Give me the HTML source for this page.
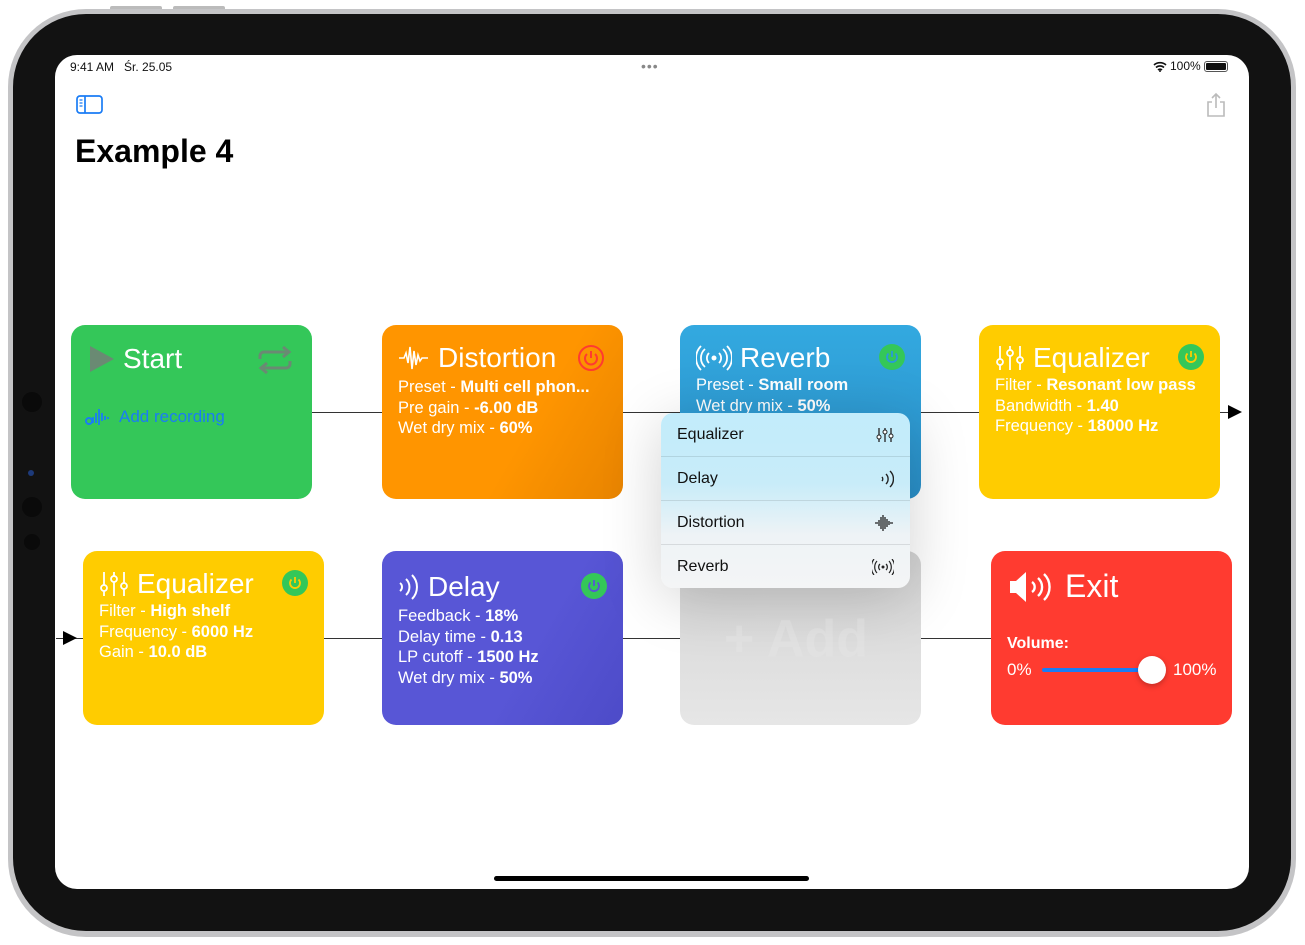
<!DOCTYPE html>
<html><head><meta charset="utf-8">
<style>
*{margin:0;padding:0;box-sizing:border-box}
body{width:1305px;height:945px;background:#fff;position:relative;overflow:hidden;font-family:"Liberation Sans",sans-serif}
.abs{position:absolute}
.frame{left:8px;top:9px;width:1288px;height:928px;border-radius:78px;background:#c4c4c6;}
.bez{left:13px;top:14px;width:1278px;height:917px;border-radius:73px;background:#121212}
.screen{left:55px;top:55px;width:1194px;height:834px;border-radius:22px;background:#fff;overflow:hidden}
.card{position:absolute;width:241px;height:174px;border-radius:14px;color:#fff;overflow:hidden}
.title{position:absolute;font-size:28px;left:16px;top:17px;display:flex;align-items:center;gap:8px;white-space:nowrap}
.lines{position:absolute;left:16px;font-size:16.5px;line-height:20.5px;white-space:nowrap}
.lines b{font-weight:bold}
.pw{position:absolute;width:26px;height:26px;border-radius:50%;background:#34c759;top:20px;right:16px}
.line{position:absolute;height:1px;background:#333}
.menu{left:661px;top:413px;width:249px;height:175px;border-radius:12px;overflow:hidden;box-shadow:0 10px 60px rgba(0,0,0,.18)}
.mi{height:44px;border-bottom:1px solid rgba(0,0,0,.1);display:flex;align-items:center;justify-content:space-between;padding:0 16px;font-size:16px;color:#111}
</style></head><body>
<div class="abs" style="left:110px;top:6px;width:52px;height:5px;background:#bbb;border-radius:2px"></div>
<div class="abs" style="left:173px;top:6px;width:52px;height:5px;background:#bbb;border-radius:2px"></div>
<div class="abs frame"></div>
<div class="abs bez"></div>
<div class="abs" style="left:22px;top:392px;width:20px;height:20px;border-radius:50%;background:#0a0a0a"></div>
<div class="abs" style="left:28px;top:470px;width:6px;height:6px;border-radius:50%;background:#1d3a7a"></div>
<div class="abs" style="left:22px;top:497px;width:20px;height:20px;border-radius:50%;background:#0a0a0a"></div>
<div class="abs" style="left:24px;top:534px;width:16px;height:16px;border-radius:50%;background:#0a0a0a"></div>

<div class="abs screen">
  <div class="abs" style="left:15px;top:5px;font-size:12px;color:#111">9:41 AM&nbsp;&nbsp; Śr. 25.05</div>
  <div class="abs" style="left:586px;top:3px;font-size:14px;color:#888;letter-spacing:1px">•••</div>
  <div class="abs" style="left:1098px;top:4px;font-size:12px;color:#111;display:flex;align-items:center;gap:3px">
    <svg width="14" height="11" viewBox="0 0 14 11"><path d="M1 4a9 9 0 0 1 12 0M3 6.5a6 6 0 0 1 8 0M5 9a3 3 0 0 1 4 0" stroke="#111" stroke-width="1.6" fill="none"/><circle cx="7" cy="10" r="1" fill="#111"/></svg>100%
    <span style="display:inline-block;width:24px;height:11px;border:1px solid #555;border-radius:3px;padding:1px"><span style="display:block;height:100%;background:#111;border-radius:1px"></span></span>
  </div>
  <svg class="abs" style="left:21px;top:40px" width="27" height="20" viewBox="0 0 27 20"><rect x="1" y="1" width="25" height="17" rx="3" fill="none" stroke="#1a7cf5" stroke-width="1.7"/><line x1="9" y1="1" x2="9" y2="18" stroke="#1a7cf5" stroke-width="1.7"/><path d="M3.5 5h3M3.5 8h3M3.5 11h3" stroke="#1a7cf5" stroke-width="1.2"/></svg>
  <svg class="abs" style="left:1151px;top:37px" width="20" height="26" viewBox="0 0 20 26"><path d="M6 10H2v14h16V10h-4M10 2v14M6 6l4-4 4 4" stroke="#bbb" stroke-width="1.6" fill="none"/></svg>
  <div class="abs" style="left:20px;top:78px;font-size:32px;font-weight:bold;color:#000">Example 4</div>
</div>

<div class="line" style="left:312px;top:412px;width:920px"></div>
<svg class="abs" style="left:1228px;top:405px" width="14" height="14"><path d="M0 0L14 7L0 14Z" fill="#000"/></svg>
<div class="line" style="left:56px;top:638px;width:935px"></div>
<svg class="abs" style="left:63px;top:631px" width="14" height="14"><path d="M0 0L14 7L0 14Z" fill="#000"/></svg>

<div class="card" style="left:71px;top:325px;background:#34c759">
  <div class="title" style="top:18px"><svg width="28" height="30"><path d="M3 2L27 15L3 28Z" fill="#6a8a73"/></svg>Start</div>
  <svg class="abs" style="left:186px;top:20px" width="36" height="30" viewBox="0 0 36 30"><path d="M3 14V11a4 4 0 0 1 4-4h25M26 2l6 5-6 5M33 16v3a4 4 0 0 1-4 4H4M10 18l-6 5 6 5" stroke="#6a8a73" stroke-width="3" fill="none"/></svg>
  <div class="abs" style="left:14px;top:82px;font-size:17px;color:#1a7cf5;display:flex;align-items:center;gap:8px;font-weight:500"><svg width="26" height="20" viewBox="0 0 26 20"><circle cx="4" cy="14" r="3" fill="none" stroke="#1a7cf5" stroke-width="2"/><path d="M8 10v6M11 6v10M14 2v16M17 6v8M20 9v4M23 10v2" stroke="#1a7cf5" stroke-width="1.8"/></svg>Add recording</div>
</div>

<div class="card" style="left:382px;top:325px;background:linear-gradient(120deg,#ff9500 60%,#e88400)">
  <div class="title" style="top:17px"><svg width="32" height="30" viewBox="0 0 32 30"><path d="M1 15h5l2-5 2 10 2-16 2 22 2-18 2 14 2-10 2 6 2-3h6" stroke="#fff" stroke-width="1.6" fill="none"/></svg>Distortion</div>
  <svg class="abs" style="left:195px;top:19px" width="28" height="28" viewBox="0 0 28 28"><circle cx="14" cy="14" r="12" fill="none" stroke="#ff3b30" stroke-width="2"/><path d="M10 10a6 6 0 1 0 8 0M14 7v7" stroke="#ff3b30" stroke-width="2" fill="none"/></svg>
  <div class="lines" style="top:52px">Preset - <b>Multi cell phon...</b><br>Pre gain - <b>-6.00 dB</b><br>Wet dry mix - <b>60%</b></div>
</div>

<div class="card" style="left:680px;top:325px;background:linear-gradient(#33a9e0,#2a8fc8)">
  <div class="title" style="top:17px"><svg width="36" height="28" viewBox="0 0 36 28"><circle cx="18" cy="14" r="2.5" fill="#fff"/><path d="M13 9a7 7 0 0 0 0 10M23 9a7 7 0 0 1 0 10M9 5a12 12 0 0 0 0 18M27 5a12 12 0 0 1 0 18M5 2a17 17 0 0 0 0 24M31 2a17 17 0 0 1 0 24" stroke="#fff" stroke-width="1.8" fill="none"/></svg>Reverb</div>
  <div class="pw" style="top:19px"><svg width="26" height="26" viewBox="0 0 26 26"><path d="M9.5 9.5a5 5 0 1 0 7 0M13 7v6" stroke="#2a9ad8" stroke-width="1.8" fill="none"/></svg></div>
  <div class="lines" style="top:50px">Preset - <b>Small room</b><br>Wet dry mix - <b>50%</b></div>
</div>

<div class="card" style="left:979px;top:325px;background:#ffcc00">
  <div class="title" style="top:17px"><svg width="30" height="28" viewBox="0 0 30 28"><path d="M5 2v24M15 2v24M25 2v24" stroke="#fff" stroke-width="1.8"/><circle cx="5" cy="18" r="3" fill="#ffcc00" stroke="#fff" stroke-width="1.8"/><circle cx="15" cy="9" r="3" fill="#ffcc00" stroke="#fff" stroke-width="1.8"/><circle cx="25" cy="16" r="3" fill="#ffcc00" stroke="#fff" stroke-width="1.8"/></svg>Equalizer</div>
  <div class="pw" style="top:19px"><svg width="26" height="26" viewBox="0 0 26 26"><path d="M9.5 9.5a5 5 0 1 0 7 0M13 7v6" stroke="#ffcc00" stroke-width="1.8" fill="none"/></svg></div>
  <div class="lines" style="top:50px">Filter - <b>Resonant low pass</b><br>Bandwidth - <b>1.40</b><br>Frequency - <b>18000 Hz</b></div>
</div>

<div class="card" style="left:83px;top:551px;background:#ffcc00">
  <div class="title" style="top:17px"><svg width="30" height="28" viewBox="0 0 30 28"><path d="M5 2v24M15 2v24M25 2v24" stroke="#fff" stroke-width="1.8"/><circle cx="5" cy="18" r="3" fill="#ffcc00" stroke="#fff" stroke-width="1.8"/><circle cx="15" cy="9" r="3" fill="#ffcc00" stroke="#fff" stroke-width="1.8"/><circle cx="25" cy="16" r="3" fill="#ffcc00" stroke="#fff" stroke-width="1.8"/></svg>Equalizer</div>
  <div class="pw" style="top:19px"><svg width="26" height="26" viewBox="0 0 26 26"><path d="M9.5 9.5a5 5 0 1 0 7 0M13 7v6" stroke="#ffcc00" stroke-width="1.8" fill="none"/></svg></div>
  <div class="lines" style="top:50px">Filter - <b>High shelf</b><br>Frequency - <b>6000 Hz</b><br>Gain - <b>10.0 dB</b></div>
</div>

<div class="card" style="left:382px;top:551px;background:linear-gradient(120deg,#5856d6 60%,#4d4bc8)">
  <div class="title" style="top:20px"><svg width="22" height="30" viewBox="0 0 22 30"><path d="M2 11a5 5 0 0 1 0 8M8 7a11 11 0 0 1 0 16M14 3a17 17 0 0 1 0 24" stroke="#fff" stroke-width="2" fill="none"/></svg>Delay</div>
  <div class="pw" style="top:22px"><svg width="26" height="26" viewBox="0 0 26 26"><path d="M9.5 9.5a5 5 0 1 0 7 0M13 7v6" stroke="#5856d6" stroke-width="1.8" fill="none"/></svg></div>
  <div class="lines" style="top:55px">Feedback - <b>18%</b><br>Delay time - <b>0.13</b><br>LP cutoff - <b>1500 Hz</b><br>Wet dry mix - <b>50%</b></div>
</div>

<div class="card" style="left:680px;top:551px;background:linear-gradient(#d4d4d4,#e6e6e6)">
  <div class="abs" style="left:44px;top:58px;font-size:52px;font-weight:bold;color:#e2e2e2">+ Add</div>
</div>

<div class="card" style="left:991px;top:551px;background:#ff3b30">
  <div class="title" style="top:17px;font-size:32px"><svg width="50" height="36" viewBox="0 0 50 36"><path d="M3 12h6l10-9v30l-10-9H3z" fill="#fff"/><path d="M25 13a6 6 0 0 1 0 10M31 9a12 12 0 0 1 0 18M37 5a18 18 0 0 1 0 26" stroke="#fff" stroke-width="2.4" fill="none"/></svg>Exit</div>
  <div class="abs" style="left:16px;top:84px;font-size:16px;font-weight:bold">Volume:</div>
  <div class="abs" style="left:16px;top:109px;font-size:17px">0%</div>
  <div class="abs" style="left:51px;top:117px;width:112px;height:4px;background:#1a7cf5;border-radius:2px"></div>
  <div class="abs" style="left:147px;top:105px;width:28px;height:28px;border-radius:50%;background:#fff;box-shadow:0 2px 6px rgba(0,0,0,.25)"></div>
  <div class="abs" style="left:182px;top:109px;font-size:17px">100%</div>
</div>

<div class="abs menu" style="background:linear-gradient(#c2ecfb,#c8ecf9 40%,#eef3f6 70%,#f4f5f6)">
  <div class="mi">Equalizer<svg width="18" height="16" viewBox="0 0 18 16"><path d="M3 1v14M9 1v14M15 1v14" stroke="#222" stroke-width="1.3"/><circle cx="3" cy="10" r="2" fill="#fff" stroke="#222"/><circle cx="9" cy="5" r="2" fill="#fff" stroke="#222"/><circle cx="15" cy="9" r="2" fill="#fff" stroke="#222"/></svg></div>
  <div class="mi">Delay<svg width="14" height="18" viewBox="0 0 14 18"><path d="M2 7a3 3 0 0 1 0 4M6 4a7 7 0 0 1 0 10M10 1a11 11 0 0 1 0 16" stroke="#222" stroke-width="1.4" fill="none"/></svg></div>
  <div class="mi">Distortion<svg width="20" height="18" viewBox="0 0 20 18"><path d="M1 9h3M5 6v6M7 3v12M9 1v16M11 3v12M13 5v8M15 7v4M16 9h3" stroke="#222" stroke-width="1.3"/></svg></div>
  <div class="mi" style="border-bottom:none">Reverb<svg width="22" height="16" viewBox="0 0 22 16"><circle cx="11" cy="8" r="1.5" fill="#222"/><path d="M8 5a4 4 0 0 0 0 6M14 5a4 4 0 0 1 0 6M5 2a9 9 0 0 0 0 12M17 2a9 9 0 0 1 0 12M2 0a13 13 0 0 0 0 16M20 0a13 13 0 0 1 0 16" stroke="#222" stroke-width="1.2" fill="none"/></svg></div>
</div>

<div class="abs" style="left:494px;top:876px;width:315px;height:5px;border-radius:3px;background:#000"></div>
</body></html>
